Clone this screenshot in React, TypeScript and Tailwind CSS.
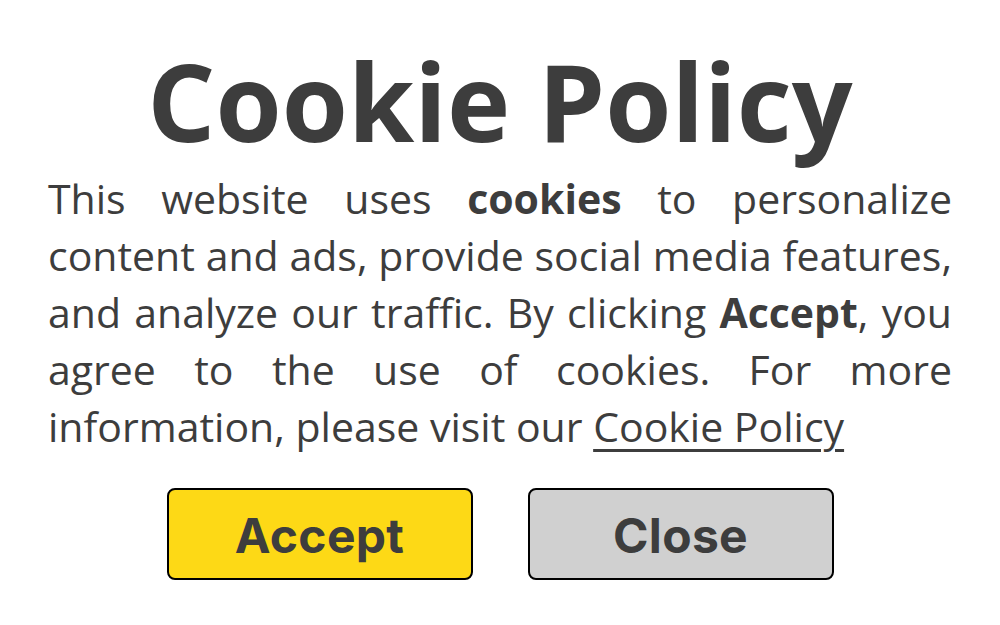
export default function App() {
  return (
    <div className="w-[1000px] h-[625px] bg-white flex flex-col items-center text-[#3d3d3d]" style={{ fontFamily: '"Open Sans", sans-serif' }}>
      <h1 className="mt-[47px] text-[107px] leading-none font-bold">Cookie Policy</h1>
      <p className="mt-[16px] w-[904px] text-[41px] leading-[57px] text-justify">
        This website uses <b className="font-bold">cookies</b> to personalize content and ads, provide social media features, and analyze our traffic. By clicking <b className="font-bold">Accept</b>, you agree to the use of cookies. For more information, please visit our <a className="underline decoration-[3px] underline-offset-[7px]">Cookie Policy</a>
      </p>
      <div className="mt-[33px] flex gap-[55px]">
        <button className="w-[306px] h-[92px] pt-[3px] bg-[#fdd916] border-2 border-black rounded-[8px] text-[48px] tracking-[0.3px] font-bold text-[#3d3d3d]" style={{ fontFamily: 'Inter, sans-serif' }}>Accept</button>
        <button className="w-[306px] h-[92px] pt-[3px] bg-[#d0d0d0] border-2 border-black rounded-[8px] text-[48px] tracking-[0.3px] font-bold text-[#3d3d3d]" style={{ fontFamily: 'Inter, sans-serif' }}>Close</button>
      </div>
    </div>
  );
}
